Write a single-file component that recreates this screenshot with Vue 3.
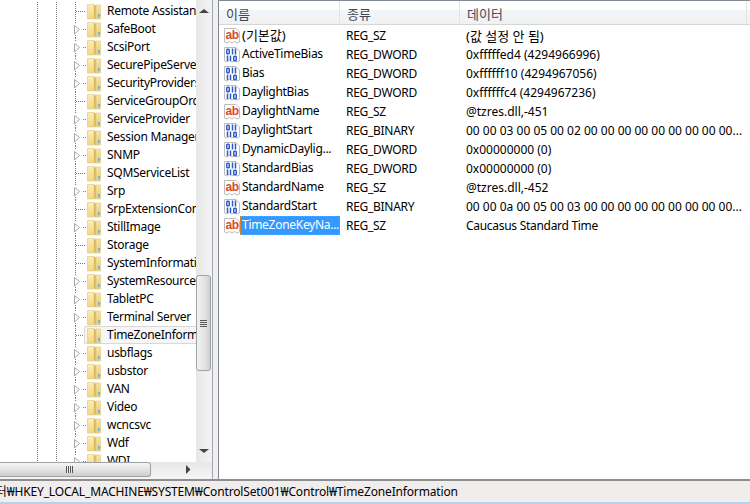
<script setup>
const tree = [
  ['Remote Assistance', 0], ['SafeBoot', 1], ['ScsiPort', 1], ['SecurePipeServers', 1], ['SecurityProviders', 1],
  ['ServiceGroupOrder', 0], ['ServiceProvider', 1], ['Session Manager', 1], ['SNMP', 1], ['SQMServiceList', 0],
  ['Srp', 1], ['SrpExtensionConfig', 0], ['StillImage', 1], ['Storage', 0], ['SystemInformation', 0],
  ['SystemResources', 1], ['TabletPC', 1], ['Terminal Server', 1], ['TimeZoneInformation', 0, true], ['usbflags', 1],
  ['usbstor', 1], ['VAN', 1], ['Video', 1], ['wcncsvc', 1], ['Wdf', 1], ['WDI', 1]
].map(([name, exp, sel]) => ({ name, exp, sel }))

const rows = [
  ['s', '(기본값)', 'REG_SZ', '(값 설정 안 됨)'],
  ['b', 'ActiveTimeBias', 'REG_DWORD', '0xfffffed4 (4294966996)'],
  ['b', 'Bias', 'REG_DWORD', '0xffffff10 (4294967056)'],
  ['b', 'DaylightBias', 'REG_DWORD', '0xffffffc4 (4294967236)'],
  ['s', 'DaylightName', 'REG_SZ', '@tzres.dll,-451'],
  ['b', 'DaylightStart', 'REG_BINARY', '00 00 03 00 05 00 02 00 00 00 00 00 00 00 00 00...'],
  ['b', 'DynamicDaylig...', 'REG_DWORD', '0x00000000 (0)'],
  ['b', 'StandardBias', 'REG_DWORD', '0x00000000 (0)'],
  ['s', 'StandardName', 'REG_SZ', '@tzres.dll,-452'],
  ['b', 'StandardStart', 'REG_BINARY', '00 00 0a 00 05 00 03 00 00 00 00 00 00 00 00 00...'],
  ['s', 'TimeZoneKeyNa...', 'REG_SZ', 'Caucasus Standard Time', true]
].map(([icon, name, type, data, sel]) => ({ icon, name, type, data, sel }))

const isKo = (s) => /[가-힣]/.test(s)
const isNum = (s) => /\d/.test(s)
</script>

<template>
  <div class="app">
    <div class="main">
      <div class="tree-pane">
        <div class="tree-top">
          <div class="tree">
            <div v-for="t in tree" :key="t.name" class="tree-row">
              <svg class="exp" width="16" height="18" viewBox="0 0 16 18">
                <template v-if="t.exp">
                  <path d="M5.5 0V3M5.5 15V18" stroke="#777" stroke-dasharray="1 1" fill="none" />
                  <path d="M13 9.5H16" stroke="#777" stroke-dasharray="1 1" fill="none" />
                  <path d="M4.5 5.5L9.5 9.5L4.5 14Z" fill="#fff" stroke="#a6a6a6" />
                </template>
                <template v-else>
                  <path d="M5.5 0V18" stroke="#777" stroke-dasharray="1 1" fill="none" />
                  <path d="M6 9.5H16" stroke="#777" stroke-dasharray="1 1" fill="none" />
                </template>
              </svg>
              <div class="item" :class="{ selected: t.sel }">
                <svg class="folder" width="14" height="18" viewBox="0 0 14 18">
                  <defs>
                    <linearGradient id="fl" x1="0" y1="0" x2="0" y2="1">
                      <stop offset="0" stop-color="#fbeeb8" />
                      <stop offset="1" stop-color="#f2d67f" />
                    </linearGradient>
                    <linearGradient id="fr" x1="0" y1="0" x2="0" y2="1">
                      <stop offset="0" stop-color="#f7e5a2" />
                      <stop offset="1" stop-color="#eccb6c" />
                    </linearGradient>
                  </defs>
                  <path d="M.5 2.5H7V17H.5Z" fill="url(#fl)" stroke="#e3cb86" stroke-width=".7" />
                  <path d="M7 2.5L9 3.5V17.5L7 16.5Z" fill="#d9b95c" />
                  <path d="M9 3H13.5V17H9Z" fill="url(#fr)" stroke="#e3cb86" stroke-width=".7" />
                  <rect x="11" y="12" width="2" height="3" fill="#6cb7e0" />
                </svg>
                <span class="label">{{ t.name }}</span>
              </div>
            </div>
          </div>
          <div class="vscroll">
            <svg width="15" height="17" viewBox="0 0 15 17"><path d="M3 13L8 9L13 13Z" fill="#444" /></svg>
            <div class="vtrack">
              <div class="vthumb"><span class="vgrip"></span></div>
            </div>
            <svg width="15" height="17" viewBox="0 0 15 17"><path d="M3 4L8 8L13 4Z" fill="#444" /></svg>
          </div>
        </div>
        <div class="hscroll">
          <div class="hthumb"><span class="hgrip"></span></div>
          <svg width="17" height="15" viewBox="0 0 17 15"><path d="M6 3L10.5 7.5L6 12Z" fill="#444" /></svg>
        </div>
      </div>
      <div class="list-pane">
        <div class="head">
          <div class="hcell c1">이름</div>
          <div class="hcell c2">종류</div>
          <div class="hcell c3">데이터</div>
        </div>
        <div class="rows">
          <div v-for="r in rows" :key="r.name" class="row">
            <div class="cell-name">
              <svg class="vicon" width="16" height="16" viewBox="0 0 16 16">
                <path d="M.5 .5H12L15.5 4V14L13 15L10.5 13.5L8 15L5.5 13.5L3 15L.5 14Z" fill="#fff" stroke="#bdbdbd" />
                <template v-if="r.icon === 's'">
                  <text x="1.5" y="11" class="abtext">ab</text>
                </template>
                <template v-else>
                  <g fill="none" stroke="#2d5cc8" stroke-width="1.5">
                    <rect x="2.75" y="2.25" width="2.5" height="4.5" rx=".8" />
                    <path d="M8.5 1.5V7.5M11.5 1.5V7.5M3.5 8.5V14M6.5 8.5V14" />
                    <rect x="9.75" y="9.25" width="2.5" height="4.5" rx=".8" />
                  </g>
                </template>
              </svg>
              <span class="name" :class="{ hit: r.sel, ko: isKo(r.name) }">{{ r.name }}</span>
            </div>
            <div class="cell-type">{{ r.type }}</div>
            <div class="cell-data" :class="{ ko: isKo(r.data), num: isNum(r.data) }">{{ r.data }}</div>
          </div>
        </div>
      </div>
    </div>
    <div class="status"><span class="path">컴퓨터₩HKEY_LOCAL_MACHINE₩SYSTEM₩ControlSet001₩Control₩TimeZoneInformation</span></div>
    <div class="frame"></div>
  </div>
</template>

<style scoped>
.app {
  width: 750px;
  height: 504px;
  display: flex;
  flex-direction: column;
  overflow: hidden;
  background: #f0f0f0;
  font-family: "Noto Sans", "Noto Sans CJK KR", sans-serif;
  font-size: 12px;
  letter-spacing: -0.29px;
  color: #000;
}
.main {
  height: 479px;
  display: flex;
}
.tree-pane {
  width: 213px;
  height: 479px;
  box-sizing: border-box;
  border-right: 1px solid #a3a6aa;
  display: flex;
  flex-direction: column;
  background: #f4f4f4;
}
.tree-top {
  height: 462px;
  display: flex;
  overflow: hidden;
  background: #fff;
}
.tree {
  width: 196px;
  padding-top: 2px;
  overflow: hidden;
  flex: none;
}
.tree-row {
  height: 18px;
  display: flex;
  padding-left: 70px;
  background-image: linear-gradient(#777 50%, transparent 50%), linear-gradient(#777 50%, transparent 50%);
  background-size: 1px 2px, 1px 2px;
  background-position: 37px 0, 56px 0;
  background-repeat: repeat-y;
}
.exp {
  flex: none;
  margin-right: -2px;
}
.item {
  flex: 1;
  min-width: 0;
  display: flex;
  align-items: center;
  box-sizing: border-box;
  height: 18px;
  border: 1px solid transparent;
  border-right: 0;
  padding-left: 2px;
  border-radius: 2px 0 0 2px;
}
.item.selected {
  background: #f6f6f6;
  border-color: #d9d9d9;
}
.folder {
  flex: none;
  margin-right: 6px;
}
.label {
  white-space: nowrap;
  line-height: 16px;
}
.vscroll {
  width: 16px;
  flex: none;
  display: flex;
  flex-direction: column;
  background: linear-gradient(90deg, #e7e7e7, #f3f3f3);
}
.vscroll svg {
  flex: none;
}
.vtrack {
  flex: 1;
  padding: 258px 0 0;
  box-sizing: border-box;
}
.vthumb {
  width: 15px;
  height: 96px;
  box-sizing: border-box;
  border: 1px solid #9da2a8;
  border-radius: 3px;
  background: linear-gradient(90deg, #f1f1f1, #e2e2e2 60%, #cfcfcf);
  display: flex;
  align-items: center;
  justify-content: center;
}
.vgrip {
  width: 7px;
  height: 7px;
  background: repeating-linear-gradient(#555 0 1px, #e8e8e8 1px 2px);
}
.hscroll {
  height: 15px;
  display: flex;
  background: linear-gradient(#e7e7e7, #f3f3f3);
}
.hscroll svg {
  margin-left: 29px;
}
.hthumb {
  width: 151px;
  height: 15px;
  box-sizing: border-box;
  border: 1px solid #9da2a8;
  border-left: 0;
  border-radius: 0 3px 3px 0;
  background: linear-gradient(#f4f4f4, #e2e2e2 55%, #cdcdcd);
  display: flex;
  align-items: center;
  justify-content: center;
  padding-right: 11px;
}
.hgrip {
  width: 7px;
  height: 7px;
  background: repeating-linear-gradient(90deg, #555 0 1px, #e8e8e8 1px 2px);
}
.list-pane {
  margin-left: 5px;
  flex: 1;
  border-left: 1px solid #82878f;
  border-top: 1px solid #7f8a94;
  background: #fff;
}
.head {
  height: 24px;
  box-sizing: border-box;
  display: flex;
  border-bottom: 1px solid #d5d5d5;
  background: linear-gradient(#fff 0 9px, #f4f5f7 9px, #f0f1f3 100%);
}
.hcell {
  box-sizing: border-box;
  height: 23px;
  line-height: 27px;
  padding-left: 7px;
  font-size: 13px;
  letter-spacing: 0;
  color: #3c4a5c;
  border-right: 1px solid #e2e3e5;
}
.c1 { width: 121px; }
.c2 { width: 120px; }
.c3 { width: 287px; }
.rows {
  padding-top: 1px;
}
.row {
  height: 19px;
  display: flex;
  align-items: center;
  white-space: nowrap;
}
.cell-name {
  width: 121px;
  height: 19px;
  flex: none;
  display: flex;
  align-items: center;
  padding-left: 5px;
  box-sizing: border-box;
}
.vicon {
  flex: none;
}
.abtext {
  font-family: "Liberation Sans", sans-serif;
  font-size: 12px;
  font-weight: 700;
  letter-spacing: -0.3px;
  fill: #d8472a;
}
.name {
  flex: 1;
  min-width: 0;
  overflow: hidden;
  height: 19px;
  line-height: 18px;
  padding-left: 2px;
  box-sizing: border-box;
}
.name.hit {
  background: #3399ff;
  color: #fff;
  outline: 1px dotted #d88a3a;
  outline-offset: -1px;
}
.ko {
  font-size: 13px;
  letter-spacing: 0;
}
.num {
  letter-spacing: 0;
}
.cell-type {
  width: 120px;
  flex: none;
  padding-left: 6px;
  box-sizing: border-box;
}
.cell-data {
  padding-left: 6px;
}
.status {
  height: 23px;
  box-sizing: border-box;
  border-top: 2px solid #8e8e8e;
  background: #f0eded;
  line-height: 21px;
  letter-spacing: -0.16px;
  overflow: hidden;
  white-space: nowrap;
}
.path {
  display: inline-block;
  margin-left: -26px;
}
.frame {
  height: 2px;
  background: #b9d1ea;
}
</style>
